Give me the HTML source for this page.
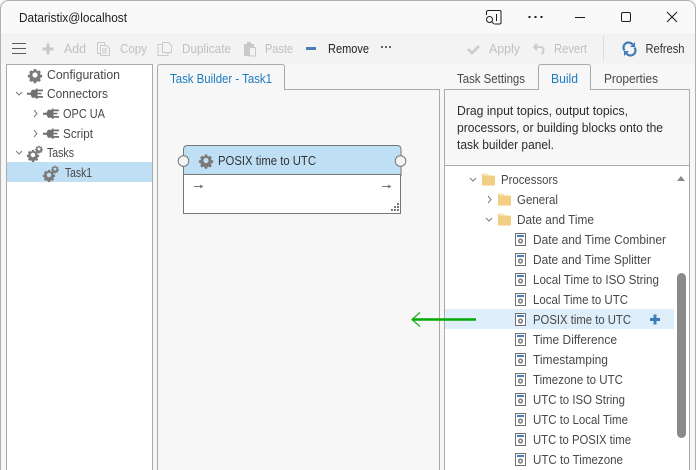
<!DOCTYPE html>
<html><head><meta charset="utf-8"><style>
html,body{margin:0;padding:0;width:696px;height:470px;overflow:hidden;background:#fff}
svg{display:block}
text{font-family:"Liberation Sans",sans-serif;font-size:12.5px;fill:#3c3c3c}
.d{fill:#c0c0c0}
.t{fill:#484848}
</style></head><body>
<svg width="696" height="470" viewBox="0 0 696 470" xmlns="http://www.w3.org/2000/svg">
<defs>
<g id="gear"><path transform="scale(.86)" fill="#7a7a7a" fill-rule="evenodd" d="M-1.400-7h2.800l.4 1.900 1.300.6 1.700-1 2 2-1 1.700.6 1.300 1.900.4v2.800l-1.900.4-.6 1.300 1 1.700-2 2-1.700-1-1.300.6-.4 1.900h-2.800l-.4-1.900-1.300-.6-1.700 1-2-2 1-1.700-.6-1.300-1.900-.4v-2.800l1.900-.4.6-1.300-1-1.700 2-2 1.700 1 1.300-.6zM0-3a3 3 0 1 0 0 6 3 3 0 0 0 0-6z"/></g>
<g id="plug"><path fill="#707070" d="M-8-.8h3.500l1.500-3h4v-1.200h1.500v10.400h-1.500v-1.200h-4l-1.500-3h-3.500z"/><path fill="#707070" d="M2.500-4h5.500v1.700h-5.500zM2.500 2.500h5.500v1.700h-5.500zM2.500-.8h4v1.700h-4z"/></g>
<g id="gears"><use href="#gear" transform="translate(-1.500 2) scale(.86)"/><use href="#gear" transform="translate(4.500 -4) scale(.55)"/></g>
<g id="folder"><path fill="#f2cd84" d="M0 1.500q0-1 1-1h3.500l2 2h5.500q1 0 1 1v8q0 1-1 1h-11q-1 0-1-1z"/><path fill="#fbe6b8" d="M1 .8h3.300l1.800 1.900h-5z"/></g>
<g id="proc"><rect x=".5" y=".5" width="10" height="12" fill="#fff" stroke="#707070"/><rect x="2" y="2" width="7" height="2" fill="#4a7fb9"/><circle cx="5.500" cy="8" r="2.600" fill="#808080"/><circle cx="5.500" cy="8" r="1" fill="#fff"/></g>
</defs>

<rect width="696" height="470" fill="#f7f7f7"/>
<rect x=".5" y=".5" width="695" height="480" rx="8" fill="#f9f9f9" stroke="#b0b0b0"/>
<rect x="1" y="33" width="694" height="31" fill="#f3f3f3"/>
<rect x="1" y="64" width="694" height="406" fill="#f7f7f7"/>
<text x="19" y="22" style="fill:#1c1c1c" textLength="108" lengthAdjust="spacingAndGlyphs">Dataristix@localhost</text>

<!-- caption buttons -->
<g fill="none" stroke="#1c1c1c" stroke-width="1">
<path d="M488.500 10.500h11q1.500 0 1.500 1.500v11q0 1-1.500 1h-5M486.500 15v-3q0-1.500 2-1.500"/>
<circle cx="489.500" cy="19.500" r="3"/><path d="M491.700 21.700l2.300 2.300M496.500 14v7"/>
<path d="M575 17.500h10"/><rect x="621.500" y="12.500" width="9" height="9" rx="1.500"/><path d="M667 12l10 10M677 12l-10 10"/>
</g>
<g fill="#1c1c1c"><rect x="528.500" y="16" width="2" height="2"/><rect x="534.500" y="16" width="2" height="2"/><rect x="540.500" y="16" width="2" height="2"/></g>

<!-- toolbar -->
<path d="M12 44h14M12 49h14M12 54h14" stroke="#5c5c5c" stroke-width="1" fill="none" transform="translate(0 -.5)"/>
<path d="M46.500 43.500h3v4h4v3h-4v4h-3v-4h-4v-3h4z" fill="#c8c8c8"/>
<text class="d" x="64" y="53" textLength="22" lengthAdjust="spacingAndGlyphs">Add</text>
<g fill="none" stroke="#cacaca"><path d="M97.500 42.500h7v11h-7z"/><path d="M100.500 45.500h6l3 3v7h-9z" fill="#f3f3f3"/><path d="M102 49h5M102 51h5M102 53h5"/></g>
<text class="d" x="120" y="53" textLength="27" lengthAdjust="spacingAndGlyphs">Copy</text>
<g fill="none" stroke="#cacaca"><path d="M163.500 44.500h-5.500v11h10v-5"/><path d="M162.500 42.500h6l3 3v7h-9z" fill="#f3f3f3"/></g>
<text class="d" x="182" y="53" textLength="49" lengthAdjust="spacingAndGlyphs">Duplicate</text>
<path d="M244 44h3v-2h4v2h3v12h-10z" fill="#c8c8c8"/><path d="M249.500 47.500h6v8.500h-6z" fill="#f3f3f3" stroke="#cacaca"/>
<text class="d" x="265" y="53" textLength="28" lengthAdjust="spacingAndGlyphs">Paste</text>
<rect x="306" y="47" width="10" height="3" fill="#4a7fb9"/>
<text x="328" y="53" style="fill:#222" textLength="41" lengthAdjust="spacingAndGlyphs">Remove</text>
<g fill="#666"><rect x="381" y="46" width="2" height="2"/><rect x="385" y="46" width="2" height="2"/><rect x="389" y="46" width="2" height="2"/></g>
<path d="M468 49l4 4 7-7" fill="none" stroke="#cacaca" stroke-width="2.600"/>
<text class="d" x="489" y="53" textLength="31" lengthAdjust="spacingAndGlyphs">Apply</text>
<path d="M537 44l-3 3 3 3M534.500 47h6q3 0 3 3v1q0 2-2 3" fill="none" stroke="#cacaca" stroke-width="1.800"/>
<text class="d" x="554" y="53" textLength="33" lengthAdjust="spacingAndGlyphs">Revert</text>
<path d="M603.500 36v25" stroke="#dcdcdc"/>
<g fill="none" stroke="#3f7db8" stroke-width="2.200"><path d="M624.500 50.500a5 5 0 0 1 8-6"/><path d="M634.500 47.500a5 5 0 0 1-8 6"/></g>
<path d="M635 42v5h-5zM624 56v-5h5z" fill="#3f7db8"/>
<text x="645.500" y="53" style="fill:#333" textLength="39" lengthAdjust="spacingAndGlyphs">Refresh</text>

<!-- left panel -->
<rect x="6.500" y="64.500" width="146" height="420" fill="#fff" stroke="#aaa"/>
<rect x="7" y="162" width="145" height="20" fill="#bfdff4"/>
<use href="#gear" x="35" y="75"/>
<text class="t" x="47" y="79" textLength="73" lengthAdjust="spacingAndGlyphs">Configuration</text>
<path d="M16 92l3 3 3-3" fill="none" stroke="#7a7a7a"/>
<use href="#plug" transform="translate(35 93.500)"/>
<text class="t" x="47" y="98" textLength="61" lengthAdjust="spacingAndGlyphs">Connectors</text>
<path d="M34 110l3 3.500-3 3.500" fill="none" stroke="#7a7a7a"/>
<use href="#plug" transform="translate(51 113.500)"/>
<text class="t" x="63" y="118" textLength="42" lengthAdjust="spacingAndGlyphs">OPC UA</text>
<path d="M34 130l3 3.500-3 3.500" fill="none" stroke="#7a7a7a"/>
<use href="#plug" transform="translate(51 133.500)"/>
<text class="t" x="63" y="138" textLength="30" lengthAdjust="spacingAndGlyphs">Script</text>
<path d="M16 151l3 3 3-3" fill="none" stroke="#7a7a7a"/>
<use href="#gears" transform="translate(34.500 153)"/>
<text class="t" x="47" y="157" textLength="27" lengthAdjust="spacingAndGlyphs">Tasks</text>
<use href="#gears" transform="translate(50.500 173)"/>
<text class="t" x="65" y="177" textLength="27" lengthAdjust="spacingAndGlyphs">Task1</text>

<!-- middle panel -->
<rect x="157.500" y="89.500" width="282" height="400" fill="#f7f7f7" stroke="#aaa"/>
<path d="M157.500 90v-23q0-2.500 2.500-2.500h122q2.500 0 2.500 2.500v23" fill="#f7f7f7" stroke="#aaa"/>
<rect x="158" y="88" width="126" height="3" fill="#f7f7f7"/>
<text x="170" y="83" style="fill:#1d7bc0" textLength="102" lengthAdjust="spacingAndGlyphs">Task Builder - Task1</text>

<!-- node -->
<path d="M183.500 175.500v-26q0-4 4-4h209.500q4 0 4 4v26z" fill="#bfdff4" stroke="#777"/>
<rect x="183.500" y="174.500" width="217" height="39" fill="#fff" stroke="#777"/>
<circle cx="183.500" cy="161" r="5.300" fill="#f5f5f5" stroke="#777"/>
<circle cx="400.500" cy="161" r="5.300" fill="#f5f5f5" stroke="#777"/>
<use href="#gear" transform="translate(206 160.500)"/>
<text x="218" y="165" style="fill:#333" textLength="98" lengthAdjust="spacingAndGlyphs">POSIX time to UTC</text>
<path d="M194 186.500h8M200 185l2.500 1.500-2.500 1.500M382 186.500h8M388 185l2.500 1.500-2.500 1.500" fill="none" stroke="#777"/>
<g fill="#777"><rect x="397" y="203" width="2" height="2"/><rect x="394" y="206" width="2" height="2"/><rect x="397" y="206" width="2" height="2"/><rect x="391" y="209" width="2" height="2"/><rect x="394" y="209" width="2" height="2"/><rect x="397" y="209" width="2" height="2"/></g>

<!-- right panel -->
<rect x="444.500" y="89.500" width="245" height="400" fill="#f7f7f7" stroke="#aaa"/>
<path d="M538.500 90v-23q0-2.500 2.500-2.500h47q2.500 0 2.500 2.500v23" fill="#f7f7f7" stroke="#aaa"/>
<rect x="539" y="88" width="51" height="3" fill="#f7f7f7"/>
<text class="t" x="457" y="83" textLength="68" lengthAdjust="spacingAndGlyphs">Task Settings</text>
<text x="551" y="83" style="fill:#1d7bc0" textLength="27" lengthAdjust="spacingAndGlyphs">Build</text>
<text class="t" x="604" y="83" textLength="54" lengthAdjust="spacingAndGlyphs">Properties</text>
<text class="t" x="457" y="115" style="fill:#2c2c2c" textLength="171" lengthAdjust="spacingAndGlyphs">Drag input topics, output topics,</text>
<text class="t" x="457" y="132" style="fill:#2c2c2c" textLength="206" lengthAdjust="spacingAndGlyphs">processors, or building blocks onto the</text>
<text class="t" x="457" y="149" style="fill:#2c2c2c" textLength="97" lengthAdjust="spacingAndGlyphs">task builder panel.</text>
<rect x="445" y="165" width="244" height="305" fill="#fff"/>
<path d="M445 165.500h244" stroke="#aaa"/>
<rect x="445" y="309" width="229" height="20" fill="#deeefa"/>
<path d="M677 181l4-5 4 5z" fill="#888"/>
<rect x="677" y="273" width="9" height="165" rx="4.500" fill="#8a8a8a"/>

<!-- tree -->
<path d="M470 178l3 3 3-3" fill="none" stroke="#7a7a7a"/>
<use href="#folder" x="482" y="173"/>
<text class="t" x="501" y="184" textLength="57" lengthAdjust="spacingAndGlyphs">Processors</text>
<path d="M488 196l3 3.500-3 3.500" fill="none" stroke="#7a7a7a"/>
<use href="#folder" x="498" y="193"/>
<text class="t" x="517" y="204" textLength="41" lengthAdjust="spacingAndGlyphs">General</text>
<path d="M486 218l3 3 3-3" fill="none" stroke="#7a7a7a"/>
<use href="#folder" x="498" y="213"/>
<text class="t" x="517" y="224" textLength="77" lengthAdjust="spacingAndGlyphs">Date and Time</text>

<use href="#proc" x="515" y="233"/><text class="t" x="533" y="244" textLength="133" lengthAdjust="spacingAndGlyphs">Date and Time Combiner</text>
<use href="#proc" x="515" y="253"/><text class="t" x="533" y="264" textLength="118" lengthAdjust="spacingAndGlyphs">Date and Time Splitter</text>
<use href="#proc" x="515" y="273"/><text class="t" x="533" y="284" textLength="126" lengthAdjust="spacingAndGlyphs">Local Time to ISO String</text>
<use href="#proc" x="515" y="293"/><text class="t" x="533" y="304" textLength="95" lengthAdjust="spacingAndGlyphs">Local Time to UTC</text>
<use href="#proc" x="515" y="313"/><text class="t" x="533" y="324" textLength="98" lengthAdjust="spacingAndGlyphs">POSIX time to UTC</text>
<path d="M653.500 314.500h3v3.500h3.500v3h-3.500v3.500h-3v-3.500h-3.500v-3h3.500z" fill="#3f7db8"/>
<use href="#proc" x="515" y="333"/><text class="t" x="533" y="344" textLength="84" lengthAdjust="spacingAndGlyphs">Time Difference</text>
<use href="#proc" x="515" y="353"/><text class="t" x="533" y="364" textLength="75" lengthAdjust="spacingAndGlyphs">Timestamping</text>
<use href="#proc" x="515" y="373"/><text class="t" x="533" y="384" textLength="90" lengthAdjust="spacingAndGlyphs">Timezone to UTC</text>
<use href="#proc" x="515" y="393"/><text class="t" x="533" y="404" textLength="92" lengthAdjust="spacingAndGlyphs">UTC to ISO String</text>
<use href="#proc" x="515" y="413"/><text class="t" x="533" y="424" textLength="95" lengthAdjust="spacingAndGlyphs">UTC to Local Time</text>
<use href="#proc" x="515" y="433"/><text class="t" x="533" y="444" textLength="98" lengthAdjust="spacingAndGlyphs">UTC to POSIX time</text>
<use href="#proc" x="515" y="453"/><text class="t" x="533" y="464" textLength="90" lengthAdjust="spacingAndGlyphs">UTC to Timezone</text>

<!-- green arrow -->
<path d="M412 319.500h64" stroke="#00aa00" stroke-width="2.500" fill="none"/>
<path d="M420 312.500l-8 7 8 7" stroke="#22b022" stroke-width="1.300" fill="none"/>
</svg>
</body></html>
